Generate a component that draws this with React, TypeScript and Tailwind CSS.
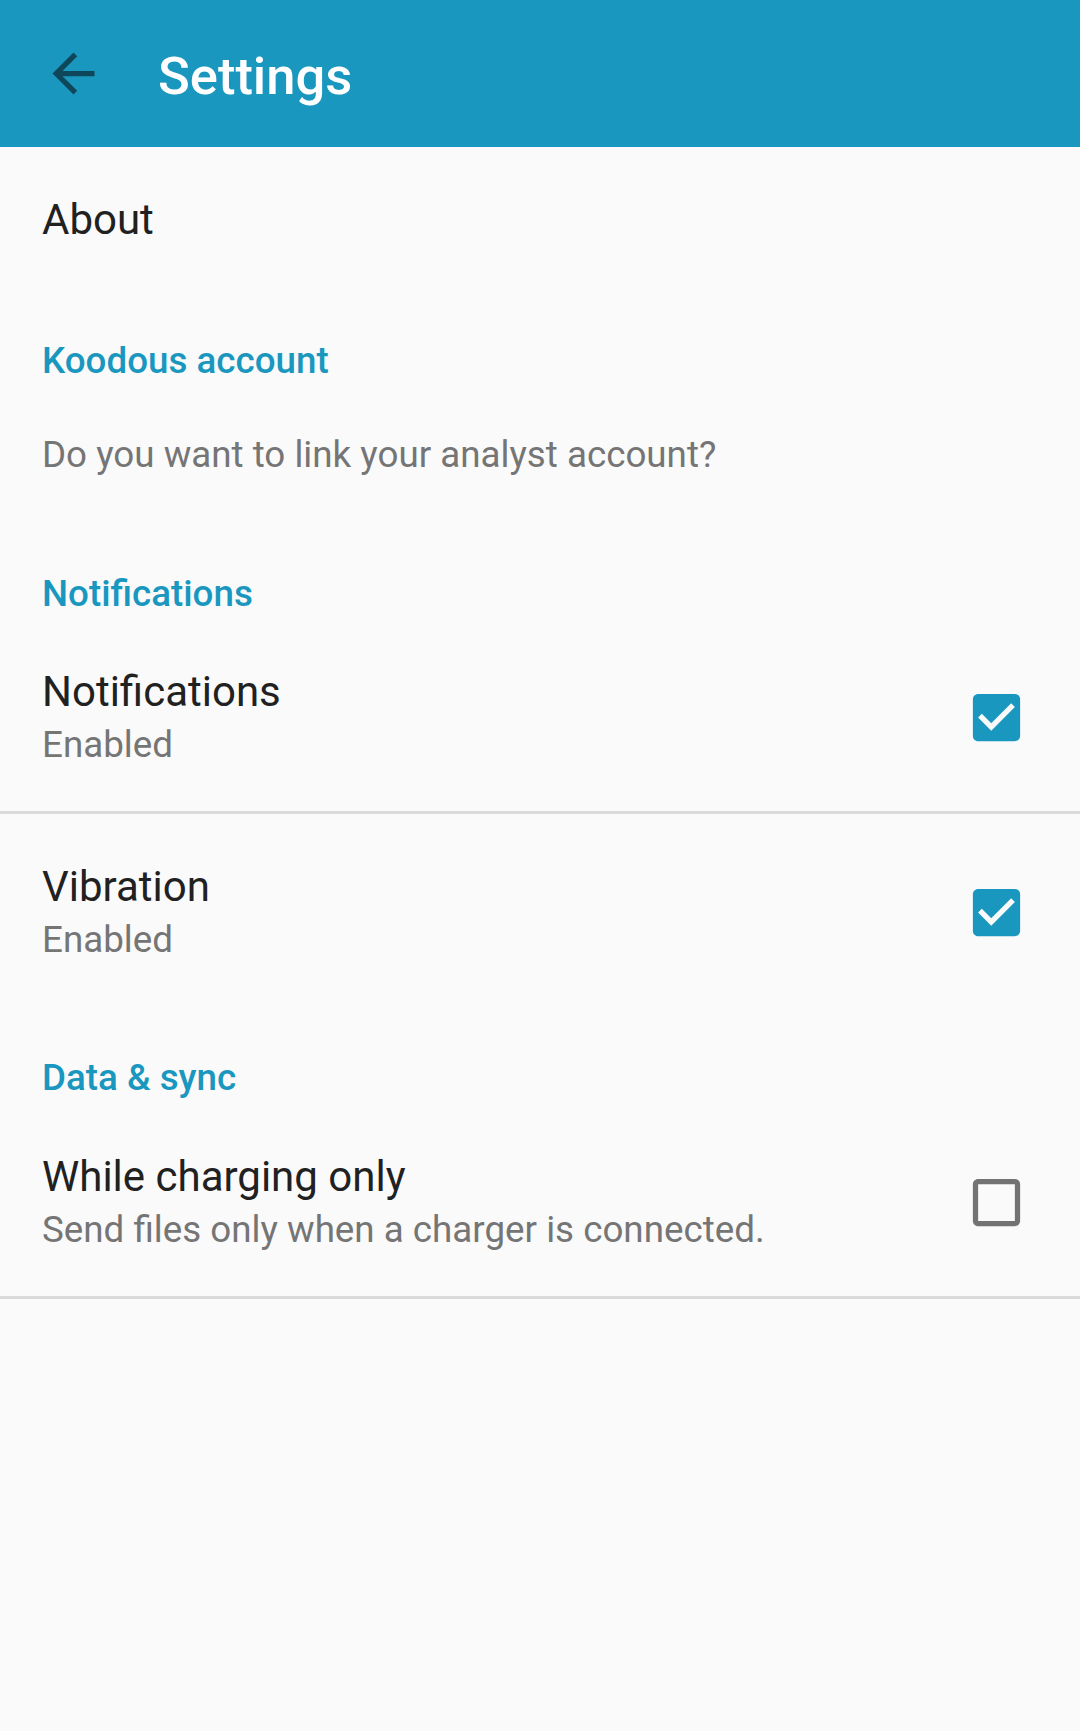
import React from "react";

const CHECKED =
    "M19 3H5c-1.11 0-2 .9-2 2v14c0 1.1.89 2 2 2h14c1.11 0 2-.9 2-2V5c0-1.1-.89-2-2-2zm-9 14l-5-5 1.41-1.41L10 14.17l7.59-7.59L19 8l-9 9z";
const UNCHECKED =
    "M19 5v14H5V5h14m0-2H5c-1.1 0-2 .9-2 2v14c0 1.1.9 2 2 2h14c1.1 0 2-.9 2-2V5c0-1.1-.9-2-2-2z";

function Checkbox({ checked }: { checked: boolean }) {
    return (
        <svg viewBox="0 0 24 24" className="w-[63px] h-[63px] shrink-0">
            <path d={checked ? CHECKED : UNCHECKED} fill={checked ? "#1a97bf" : "#737373"} />
        </svg>
    );
}

function Category({ label, className = "" }: { label: string; className?: string }) {
    return (
        <div className={`px-[42px] text-[36.75px] leading-[44px] font-medium text-[#1a97bf] ${className}`}>
            {label}
        </div>
    );
}

interface RowProps {
    title: string;
    summary: string;
    checked: boolean;
    className?: string;
}

function CheckRow({ title, summary, checked, className = "" }: RowProps) {
    return (
        <div className={`flex items-center justify-between pl-[42px] pr-[52px] ${className}`}>
            <div>
                <div className="text-[42px] leading-[50px] text-[#212121]">{title}</div>
                <div className="mt-[6px] text-[36.75px] leading-[44px] text-[#757575]">{summary}</div>
            </div>
            <Checkbox checked={checked} />
        </div>
    );
}

export default function App() {
    return (
        <div className="min-h-screen bg-[#fafafa] font-['Roboto',sans-serif]">
            {/* Toolbar */}
            <div className="h-[147px] bg-[#1a97bf] flex items-center">
                <svg viewBox="0 0 24 24" className="ml-[42px] w-[63px] h-[63px]">
                    <path d="M20 11H7.83l5.59-5.59L12 4l-8 8 8 8 1.41-1.41L7.83 13H20v-2z" fill="#0e475a" />
                </svg>
                <h1 className="ml-[53px] mt-[5px] text-[52.5px] leading-[60px] font-medium text-white">Settings</h1>
            </div>

            {/* About */}
            <div className="pt-[48px] px-[42px] text-[42px] leading-[50px] text-[#212121]">About</div>

            {/* Koodous account */}
            <Category label="Koodous account" className="mt-[94px]" />
            <div className="mt-[50px] px-[42px] text-[36.75px] leading-[44px] text-[#757575]">
                Do you want to link your analyst account?
            </div>

            {/* Notifications */}
            <Category label="Notifications" className="mt-[95px]" />
            <CheckRow title="Notifications" summary="Enabled" checked className="mt-[51px]" />
            <div className="mt-[44px] h-[3px] bg-[#dadada]" />
            <CheckRow title="Vibration" summary="Enabled" checked className="mt-[48px]" />

            {/* Data & sync */}
            <Category label="Data & sync" className="mt-[94px]" />
            <CheckRow
                title="While charging only"
                summary="Send files only when a charger is connected."
                checked={false}
                className="mt-[52px]"
            />
            <div className="mt-[44px] h-[3px] bg-[#dadada]" />
        </div>
    );
}
